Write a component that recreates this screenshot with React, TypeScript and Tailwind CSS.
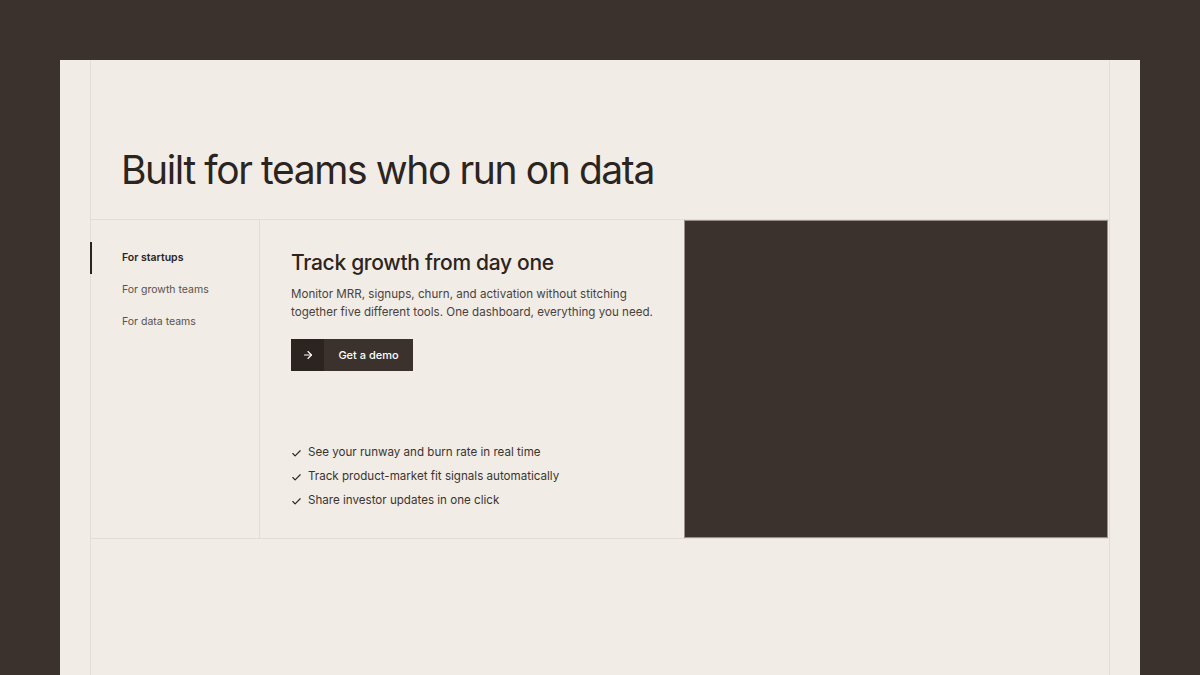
import React, { useState } from 'react';
import { Check, ArrowRight } from 'lucide-react';

const tabs = [
    {
        label: 'For startups',
        title: 'Track growth from day one',
        body: 'Monitor MRR, signups, churn, and activation without stitching together five different tools. One dashboard, everything you need.',
        points: [
            'See your runway and burn rate in real time',
            'Track product-market fit signals automatically',
            'Share investor updates in one click',
        ],
    },
    {
        label: 'For growth teams',
        title: 'Find what moves the needle',
        body: 'Run experiments, compare cohorts and see which channels actually convert.',
        points: ['Funnel analysis out of the box', 'Cohort retention charts', 'Attribution without spreadsheets'],
    },
    {
        label: 'For data teams',
        title: 'One source of truth',
        body: 'Model metrics once and let everyone query them safely.',
        points: ['SQL when you need it', 'Versioned metric definitions', 'Warehouse-native sync'],
    },
];

const App = () => {
    const [active, setActive] = useState(0);
    const tab = tabs[active];

    return (
        <div className="min-h-[675px] bg-[#3b322d] px-[60px] pt-[60px]" style={{ fontFamily: 'Inter, "Noto Sans", sans-serif' }}>
            <div className="h-[615px] bg-[#f1ece6] px-[30px]">
                <div className="h-full border-x border-[#e3ddd6]">
                    <h1 className="pl-[30px] pt-[86px] pb-[25px] text-[39px] leading-[48px] font-normal tracking-[-1.4px] text-[#2b2420]">
                        Built for teams who run on data
                    </h1>

                    <div className="grid grid-cols-[169px_424px_1fr] h-[320px] border-y border-[#e3ddd6]">
                        {/* Tabs */}
                        <div className="-ml-px border-r border-[#e3ddd6] pt-[22px] flex flex-col">
                            {tabs.map((t, index) => (
                                <button
                                    key={index}
                                    onClick={() => setActive(index)}
                                    className={`h-8 pl-[30px] text-left text-[10.5px] border-l-2 ${active === index ? 'border-[#2b2420] text-[#2b2420] font-semibold' : 'border-transparent text-[#5a524c]'}`}
                                >
                                    {t.label}
                                </button>
                            ))}
                        </div>

                        {/* Content */}
                        <div className="flex flex-col px-[31px] pt-[29px] pb-[25px]">
                            <h2 className="text-[21px] leading-[28px] font-medium tracking-[-0.3px] text-[#2b2420]">{tab.title}</h2>
                            <p className="mt-[8px] text-[11.6px] leading-[18px] text-[#4a423c] max-w-[368px]">{tab.body}</p>
                            <button className="mt-[18px] flex h-8 w-[122px] items-stretch text-[11px] font-medium text-white">
                                <span className="flex w-[33px] items-center justify-center bg-[#2b2420]">
                                    <ArrowRight size={12} strokeWidth={2.25} />
                                </span>
                                <span className="flex flex-1 items-center justify-center bg-[#3b322d]">Get a demo</span>
                            </button>
                            <ul className="mt-auto">
                                {tab.points.map((point, index) => (
                                    <li key={index} className="flex h-6 items-center gap-[6px] text-[11.6px] text-[#3b342f]">
                                        <Check size={11} strokeWidth={2.5} className="text-[#2b2420]" />
                                        {point}
                                    </li>
                                ))}
                            </ul>
                        </div>

                        {/* Visual */}
                        <div className="bg-[#3b322d] border border-[#9a8f88] mr-px" />
                    </div>
                </div>
            </div>
        </div>
    );
};

export default App;
